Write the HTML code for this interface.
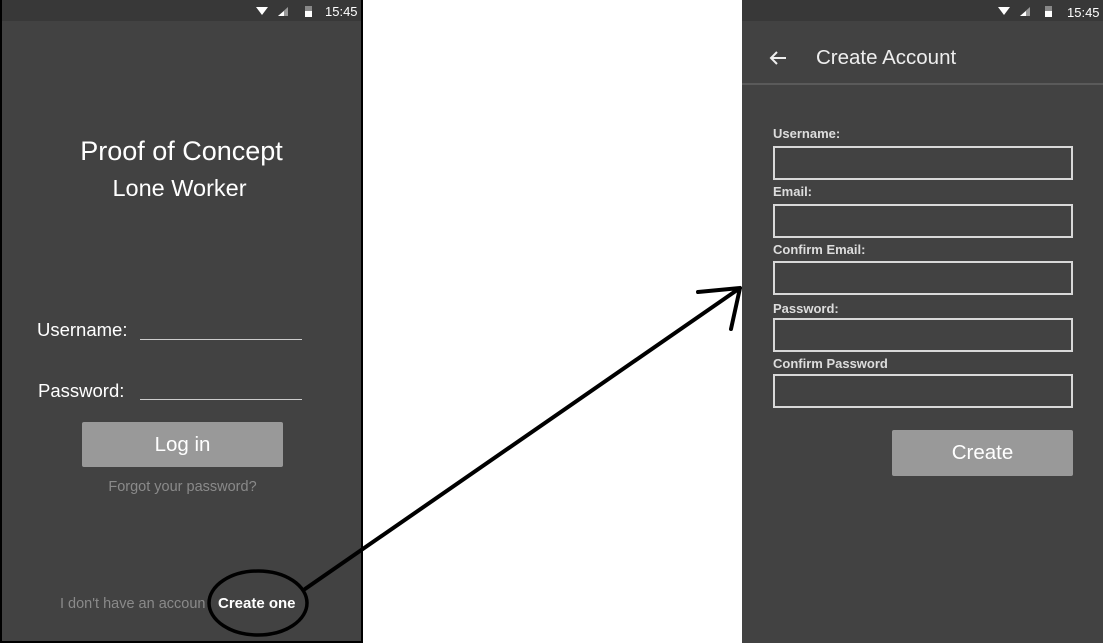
<!DOCTYPE html>
<html><head><meta charset="utf-8"><style>
*{margin:0;padding:0;box-sizing:border-box}
body{width:1103px;height:643px;background:#fff;position:relative;overflow:hidden;font-family:"Liberation Sans",Arial,sans-serif}
.ph{position:absolute;background:#424242}
.sb{position:absolute;left:0;right:0;top:0;height:21px;background:#383838}
.t{position:absolute;color:#fff;white-space:nowrap}
.box{position:absolute;left:31px;width:300px;height:34px;border:2px solid #d8d8d8}
.lbl{position:absolute;left:31px;color:#ddd;font-weight:bold;font-size:13px}
</style></head><body>
<div class="ph" style="left:0;top:0;width:363px;height:643px;border:2px solid #000;border-top:none;"></div>
<div class="ph" style="left:2px;top:0;width:359px;height:641px">
  <div class="sb"></div>
  <svg style="position:absolute;left:254px;top:6px" width="60" height="12">
    <polygon points="0,1 12,1 6,9" fill="#fff"/>
    <polygon points="22,10 32,10 32,1" fill="#999"/><polygon points="22,10 28,10 28,5" fill="#fff"/>
    <rect x="49" y="0" width="7" height="11" fill="#888"/><rect x="49" y="5" width="7" height="6" fill="#fff"/>
  </svg>
  <div class="t" style="left:323px;top:4px;font-size:13px">15:45</div>
  <div class="t" style="left:0;width:359px;text-align:center;top:136px;font-size:27px">Proof of Concept</div>
  <div class="t" style="left:0;width:355px;text-align:center;top:175px;font-size:23.5px">Lone Worker</div>
  <div class="t" style="left:35px;top:319px;font-size:18.5px">Username:</div>
  <div style="position:absolute;left:138px;top:339px;width:162px;height:1px;background:#ccc"></div>
  <div class="t" style="left:36px;top:380px;font-size:18.5px">Password:</div>
  <div style="position:absolute;left:138px;top:399px;width:162px;height:1px;background:#ccc"></div>
  <div style="position:absolute;left:80px;top:422px;width:201px;height:45px;background:#999;border-radius:2px"></div>
  <div class="t" style="left:80px;width:201px;text-align:center;top:433px;font-size:20.5px">Log in</div>
  <div class="t" style="left:80px;width:201px;text-align:center;top:479px;font-size:14.5px;color:#8a8a8a">Forgot your password?</div>
  <div class="t" style="left:58px;top:596px;font-size:14.5px;color:#8a8a8a">I don't have an accoun</div>
  <div class="t" style="left:216px;top:595px;font-size:15px;font-weight:bold">Create one</div>
</div>
<div class="ph" style="left:742px;top:0;width:361px;height:643px">
  <div class="sb"></div>
  <svg style="position:absolute;left:256px;top:6px" width="60" height="12">
    <polygon points="0,1 12,1 6,9" fill="#fff"/>
    <polygon points="22,10 32,10 32,1" fill="#999"/><polygon points="22,10 28,10 28,5" fill="#fff"/>
    <rect x="47" y="0" width="7" height="11" fill="#888"/><rect x="47" y="5" width="7" height="6" fill="#fff"/>
  </svg>
  <div class="t" style="left:325px;top:5px;font-size:13px">15:45</div>
  <svg style="position:absolute;left:26px;top:50px" width="20" height="16"><path d="M18 8H3M9 2L3 8l6 6" stroke="#eee" stroke-width="2" fill="none"/></svg>
  <div class="t" style="left:74px;top:46px;font-size:20.5px;color:#eee">Create Account</div>
  <div style="position:absolute;left:0;right:0;top:83px;height:2px;background:#5a5a5a"></div>
  <div class="lbl" style="top:126px">Username:</div><div class="box" style="top:146px"></div>
  <div class="lbl" style="top:184px">Email:</div><div class="box" style="top:204px"></div>
  <div class="lbl" style="top:242px">Confirm Email:</div><div class="box" style="top:261px"></div>
  <div class="lbl" style="top:301px">Password:</div><div class="box" style="top:318px"></div>
  <div class="lbl" style="top:356px">Confirm Password</div><div class="box" style="top:374px"></div>
  <div style="position:absolute;left:150px;top:430px;width:181px;height:46px;background:#999;border-radius:2px"></div>
  <div class="t" style="left:150px;width:181px;text-align:center;top:441px;font-size:20.5px">Create</div>
</div>
<svg style="position:absolute;left:0;top:0" width="1103" height="643">
  <ellipse cx="258" cy="603" rx="49" ry="32" stroke="#000" stroke-width="3.5" fill="none"/>
  <path d="M305 589L740 288M740 288L698 292M740 288L731 329" stroke="#000" stroke-width="4" fill="none" stroke-linecap="round"/>
</svg>
</body></html>
